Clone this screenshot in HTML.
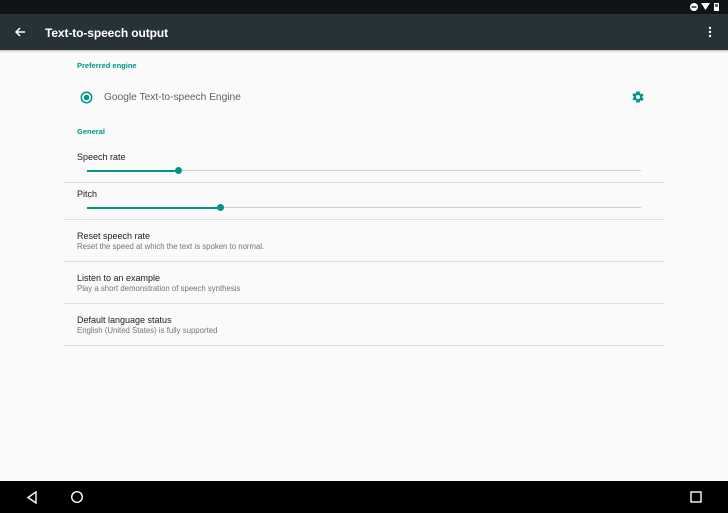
<!DOCTYPE html>
<html><head><style>
*{margin:0;padding:0;box-sizing:border-box}
body{width:728px;height:513px;background:#fafafa;font-family:"Liberation Sans",sans-serif;position:relative;overflow:hidden}
.status{position:absolute;top:0;left:0;width:728px;height:14px;background:#101417}
.bar{position:absolute;top:14px;left:0;width:728px;height:36px;background:#263238;box-shadow:0 1px 2px rgba(0,0,0,.3)}
.title{position:absolute;left:45px;top:12px;color:#fff;font-size:12px;font-weight:bold;letter-spacing:-0.1px}
.nav{position:absolute;bottom:0;left:0;width:728px;height:32px;background:#000}
.t{position:absolute;font-size:9px;color:#212121}
.s{position:absolute;font-size:7.8px;color:#757575}
.h{position:absolute;font-size:7.5px;color:#009688;font-weight:bold;left:77px}
.div{position:absolute;left:64px;width:600px;height:1px;background:#e0e0e0}
.track{position:absolute;left:87px;width:554px;height:1px;background:#cfcfcf}
.fill{position:absolute;left:87px;height:2px;background:#009688}
.knob{position:absolute;width:7px;height:7px;border-radius:50%;background:#009688}
</style></head><body>
<div class="status">
<svg style="position:absolute;right:0;top:2px" width="40" height="10"><circle cx="6" cy="5" r="4" fill="#fff"/><rect x="3.5" y="4.3" width="5" height="1.4" fill="#101417"/><path d="M13 1 L22 1 L17.5 8 Z" fill="#fff"/><rect x="26" y="1" width="5" height="8" fill="#fff"/><rect x="27" y="2" width="3" height="3" fill="#666"/></svg>
</div>
<div class="bar">
<svg style="position:absolute;left:14px;top:12px" width="12" height="12"><path d="M11 6H2M6 2L2 6 6 10" stroke="#fff" stroke-width="1.5" fill="none"/></svg>
<div class="title">Text-to-speech output</div>
<svg style="position:absolute;left:708px;top:12px" width="4" height="12"><circle cx="2" cy="2" r="1.2" fill="#fff"/><circle cx="2" cy="6" r="1.2" fill="#fff"/><circle cx="2" cy="10" r="1.2" fill="#fff"/></svg>
</div>
<div class="h" style="top:61px">Preferred engine</div>
<svg style="position:absolute;left:80px;top:91px" width="13" height="13"><circle cx="6.5" cy="6.5" r="5.2" stroke="#009688" stroke-width="1.5" fill="none"/><circle cx="6.5" cy="6.5" r="2.8" fill="#009688"/></svg>
<div class="t" style="left:104px;top:92px;font-size:10.2px;color:#616161">Google Text-to-speech Engine</div>
<svg style="position:absolute;left:631px;top:90px" width="14" height="14" viewBox="0 0 24 24"><path fill="#009688" d="M19.4 13a7.5 7.5 0 0 0 0-2l2.1-1.6-2-3.5-2.5 1a7 7 0 0 0-1.7-1L15 2.5h-6l-.4 2.9a7 7 0 0 0-1.7 1l-2.5-1-2 3.5L4.6 11a7.5 7.5 0 0 0 0 2l-2.1 1.6 2 3.5 2.5-1a7 7 0 0 0 1.7 1L9 21.5h6l.4-2.9a7 7 0 0 0 1.7-1l2.5 1 2-3.5zM12 15.5a3.5 3.5 0 1 1 0-7 3.5 3.5 0 0 1 0 7z"/></svg>
<div class="h" style="top:127px">General</div>
<div class="t" style="left:77px;top:152px">Speech rate</div>
<div class="track" style="top:170px"></div><div class="fill" style="top:170px;width:92px"></div><div class="knob" style="left:175px;top:167px"></div>
<div class="div" style="top:182px"></div>
<div class="t" style="left:77px;top:189px">Pitch</div>
<div class="track" style="top:207px"></div><div class="fill" style="top:207px;width:134px"></div><div class="knob" style="left:217px;top:204px"></div>
<div class="div" style="top:219px"></div>
<div class="t" style="left:77px;top:231px">Reset speech rate</div>
<div class="s" style="left:77px;top:242px">Reset the speed at which the text is spoken to normal.</div>
<div class="div" style="top:261px"></div>
<div class="t" style="left:77px;top:273px">Listen to an example</div>
<div class="s" style="left:77px;top:284px">Play a short demonstration of speech synthesis</div>
<div class="div" style="top:303px"></div>
<div class="t" style="left:77px;top:315px">Default language status</div>
<div class="s" style="left:77px;top:326px">English (United States) is fully supported</div>
<div class="div" style="top:345px"></div>
<div class="nav">
<svg style="position:absolute;left:26px;top:10px" width="12" height="13"><path d="M10 1L2 6.5 10 12Z" stroke="#fff" stroke-width="1.4" fill="none"/></svg>
<svg style="position:absolute;left:70px;top:9px" width="14" height="14"><circle cx="7" cy="7" r="5.3" stroke="#fff" stroke-width="1.4" fill="none"/></svg>
<svg style="position:absolute;left:690px;top:10px" width="12" height="12"><rect x="1" y="1" width="10" height="10" stroke="#fff" stroke-width="1.4" fill="none"/></svg>
</div>
</body></html>
